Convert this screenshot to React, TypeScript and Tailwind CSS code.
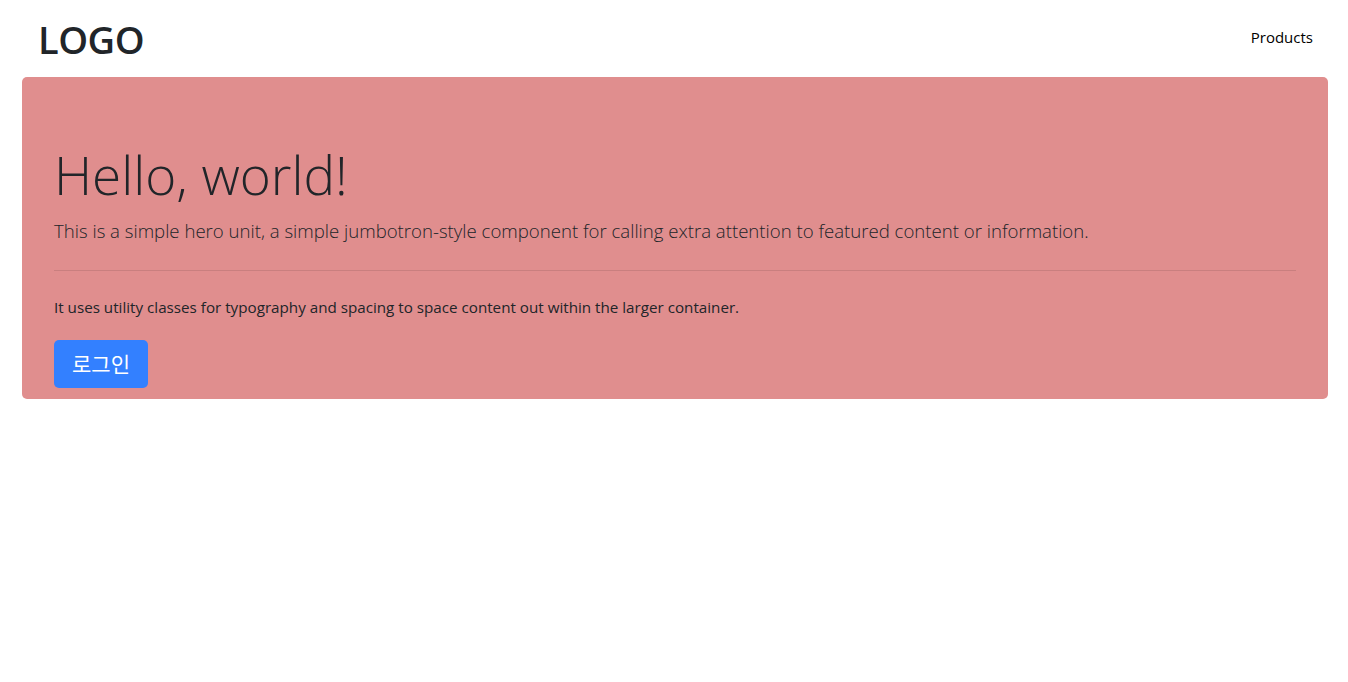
export default function App() {
  return (
    <div className="min-h-screen bg-white font-['Segoe_UI','Open_Sans','Noto_Sans_CJK_KR',sans-serif] text-[#212529]">
      <header className="flex h-[77px] items-center justify-between pl-[38px] pr-[35px]">
        <div className="text-[38px] font-semibold leading-none tracking-[-0.5px] text-[#212529]">LOGO</div>
        <nav className="flex items-center pb-[2px]">
          <a className="text-[15px] text-black" href="#">Products</a>
        </nav>
      </header>
      <div className="ml-[22px] mr-[20px] rounded-[5px] bg-[#e08e8e] px-[32px] pt-[64px] pb-[11px]">
        <h1 className="text-[53px] font-light leading-[67px]">Hello, world!</h1>
        <p className="mt-[8px] text-[18.6px] font-light leading-[30px]">
          This is a simple hero unit, a simple jumbotron-style component for calling extra attention to featured content or information.
        </p>
        <hr className="my-[24px] border-t border-black/10" />
        <p className="text-[15.2px] leading-[24px]">
          It uses utility classes for typography and spacing to space content out within the larger container.
        </p>
        <div className="mt-[21px]">
          <button className="h-[48px] rounded-[5px] bg-[#3380ff] px-[18px] text-[21px] text-white font-['Noto_Sans_CJK_KR',sans-serif]">
            로그인
          </button>
        </div>
      </div>
    </div>
  );
}
